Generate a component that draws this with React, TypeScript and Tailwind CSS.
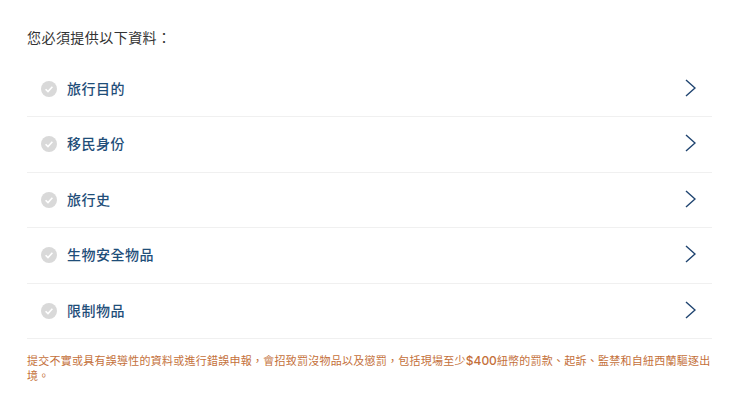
const items = ["旅行目的", "移民身份", "旅行史", "生物安全物品", "限制物品"];
const font = "font-['Noto_Sans_CJK_TC','Noto_Sans_CJK_SC',sans-serif]";

export default function App() {
  return (
    <div lang="zh-TW" className={`w-[740px] h-[412px] bg-white overflow-hidden pl-[27px] pr-[28px] pt-[27px] ${font}`}>
      <h2 className="text-[14px] leading-[20px] tracking-[0.45px] font-normal text-[#333333]">您必須提供以下資料：</h2>
      <ul className="mt-[14.4px]">
        {items.map((t) => (
          <li key={t} className="h-[55.6px] flex items-center border-b border-[#f0f0f0] pl-[14px] pr-[16px] pb-[1px]">
            <svg width="16" height="16" viewBox="0 0 16 16" className="shrink-0 mt-[1px]">
              <circle cx="8" cy="8" r="8" fill="#d9d9d9" />
              <path d="M4.6 8.2l2.4 2.4 4.4-4.8" fill="none" stroke="#fff" strokeWidth="1.6" />
            </svg>
            <span className="ml-[10px] text-[14px] tracking-[0.5px] font-medium text-[#1f4e79]">{t}</span>
            <svg width="11" height="18" viewBox="0 0 11 18" className="ml-auto shrink-0 mb-[1px]">
              <path d="M1 1l9 8-9 8" fill="none" stroke="#1f4470" strokeWidth="1.4" />
            </svg>
          </li>
        ))}
      </ul>
      <p className="mt-[14px] text-[11px] leading-[15px] tracking-[0.25px] text-[#c4703a]">
        提交不實或具有誤導性的資料或進行錯誤申報，會招致罰沒物品以及懲罰，包括現場至少<span className="inline-block font-['Inter'] font-medium text-[12px] leading-[15px] tracking-normal">$400</span>紐幣的罰款、起訴、監禁和自紐西蘭驅逐出<br />境。
      </p>
    </div>
  );
}
